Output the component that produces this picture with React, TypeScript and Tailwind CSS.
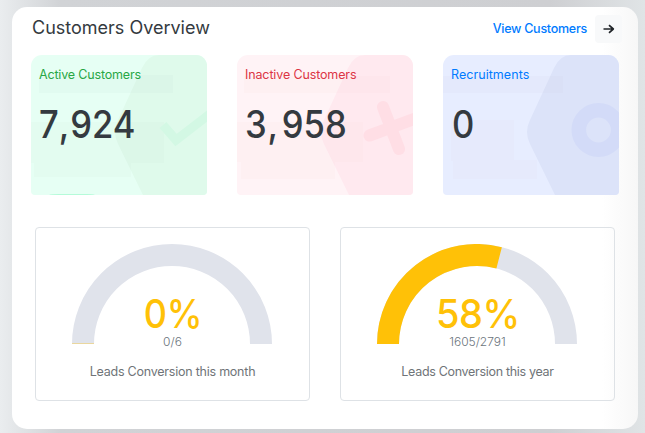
import React from "react";

type Tone = "green" | "red" | "blue";

const tones: Record<Tone, { card: string; label: string; hex: string }> = {
  green: { card: "bg-[#e6fff4]", label: "text-[#28a745]", hex: "#dffaeb" },
  red: { card: "bg-[#fff3f6]", label: "text-[#dc3545]", hex: "#ffe9ef" },
  blue: { card: "bg-[#e7edff]", label: "text-[#007bff]", hex: "#dce3f9" },
};

function Decoration({ tone }: { tone: Tone }) {
  return (
    <svg className="absolute inset-0" width="176" height="140" viewBox="0 0 176 140" fill="none">
      <path d="M176 0H128Q117 0 111 13L87 65Q81 77 87 89L112 140H176Z" fill={tones[tone].hex} />
      {tone === "green" && (
        <>
          <path d="M8 20H142V38H8Z" fill="#bcd8ca" fillOpacity=".1" />
          <path d="M0 67H133V108H100V122H3V108H0Z" fill="#bcd8ca" fillOpacity=".08" />
          <path d="M132 70L145 85L180 58" stroke="#d3f8e4" strokeWidth="9" />
          <path d="M18 140Q20 139 28 139H56Q62 139 64 140Z" fill="#b5fbd9" />
        </>
      )}
      {tone === "red" && (
        <>
          <path d="M7 21H153V38H7Z" fill="#f2cfd0" fillOpacity=".08" />
          <path d="M0 67H126V107H98V124H4V107H0Z" fill="#f5d6d0" fillOpacity=".09" />
          <path d="M132.5 80.5L180 63M146 52L162 94" stroke="#ffd9e2" strokeOpacity=".75" strokeWidth="12" strokeLinecap="round" />
        </>
      )}
      {tone === "blue" && (
        <>
          <path d="M0 21H120V38H0Z" fill="#d0d0df" fillOpacity=".1" />
          <path d="M8 65H71V105H94V124H10V106H8Z" fill="#dcd8e9" fillOpacity=".12" />
          <circle cx="155.5" cy="75" r="19.7" stroke="#d3dbf8" strokeWidth="14.6" />
        </>
      )}
    </svg>
  );
}

function Stat({ tone, label, labelClass, children }: { tone: Tone; label: string; labelClass: string; children: React.ReactNode }) {
  return (
    <div className={`relative h-[140px] w-[176px] overflow-hidden rounded-t-[11px] rounded-b-[4px] px-2 pt-[11px] ${tones[tone].card}`}>
      <Decoration tone={tone} />
      <div className={`relative text-[12.5px] leading-[18px] whitespace-nowrap ${labelClass} ${tones[tone].label}`}>{label}</div>
      <div className="relative mt-4 origin-left scale-x-[0.91] text-[38px] leading-[48px] font-medium whitespace-nowrap text-[#343a40]">{children}</div>
    </div>
  );
}

function Gauge({ value, ratio, caption, captionClass, percentClass, children }: { value: number; ratio: string; caption: string; captionClass: string; percentClass: string; children?: React.ReactNode }) {
  const angle = Math.PI * (1 - value / 100);
  const x = 100 + 89 * Math.cos(angle);
  const y = 100 - 89 * Math.sin(angle);
  return (
    <div className="flex h-[174px] w-[275px] flex-col items-center rounded-[4px] border border-[#dee2e6] pt-4 pr-px">
      <div className="relative h-[100px] w-[200px]">
        <svg width="200" height="100" viewBox="0 0 200 100" fill="none">
          <path d="M11 100A89 89 0 0 1 189 100" stroke="#e0e3eb" strokeWidth="22" />
          {value > 0 ? (
            <path d={`M11 100A89 89 0 0 1 ${x} ${y}`} stroke="#ffc107" strokeWidth="22" />
          ) : (
            <path d="M0 99.7H22" stroke="#ffc107" strokeOpacity=".6" strokeWidth=".7" />
          )}
        </svg>
        <div className={`absolute inset-x-0 top-[50px] pl-[2px] text-center text-[40px] leading-[40px] font-medium tracking-[-0.5px] text-[#ffc107] ${percentClass}`}>
          {children}
        </div>
        <div className="absolute inset-x-0 top-[91px] pl-px text-center text-[12px] leading-[14px] font-light text-[#6c757d]">{ratio}</div>
      </div>
      <div className={`mt-[19px] pl-px text-[12.5px] leading-[18px] whitespace-nowrap text-[#6f7478] ${captionClass}`}>{caption}</div>
    </div>
  );
}

export default function App() {
  return (
    <div className="h-[433px] w-[645px] overflow-hidden bg-[linear-gradient(90deg,#eaedef_0,#d1d3d6_60px,#cecfd2_550px,#e0e4e6_645px)] pt-[7px] pl-3 font-['Inter','Liberation_Sans',sans-serif]">
      <main className="h-[422px] w-[626px] rounded-[15px] bg-[linear-gradient(90deg,#fff_590px,#f7f7f7_626px)]">
        <header className="flex h-[48px] items-start justify-between pr-4 pl-5">
          <h1 className="pt-[9px] text-[18px] leading-6 whitespace-nowrap text-[#343a40]">Customers Overview</h1>
          <div className="flex items-center gap-2 pt-2">
            <a className="text-[12.5px] leading-[18px] font-medium tracking-[-0.26px] whitespace-nowrap text-[#007bff]">View Customers</a>
            <button className="flex h-7 w-[27px] items-center justify-center rounded-[4px] bg-[#f8f9fa]">
              <svg width="12" height="12" viewBox="0 0 12 12" fill="none" stroke="#212529" strokeWidth="1.7" strokeLinejoin="round">
                <path d="M.5 6H10.5M6 2.2L10.3 6L6 9.8" />
              </svg>
            </button>
          </div>
        </header>
        <section className="flex gap-[30px] pl-[19px]">
          <Stat tone="green" label="Active Customers" labelClass="tracking-[-0.17px]">
            7<span className="tracking-[1px]">,</span>924
          </Stat>
          <Stat tone="red" label="Inactive Customers" labelClass="tracking-[-0.13px]">
            3<span className="ml-px tracking-[4px]">,</span>958
          </Stat>
          <Stat tone="blue" label="Recruitments" labelClass="tracking-[0.05px]">
            <span className="ml-px">0</span>
          </Stat>
        </section>
        <section className="mt-8 flex gap-[30px] pl-[23px]">
          <Gauge value={0} ratio="0/6" caption="Leads Conversion this month" captionClass="tracking-[-0.23px]" percentClass="scale-x-[0.9]">0%</Gauge>
          <Gauge value={58} ratio="1605/2791" caption="Leads Conversion this year" captionClass="tracking-[-0.31px]" percentClass="scale-x-[0.95]">58%</Gauge>
        </section>
      </main>
    </div>
  );
}
